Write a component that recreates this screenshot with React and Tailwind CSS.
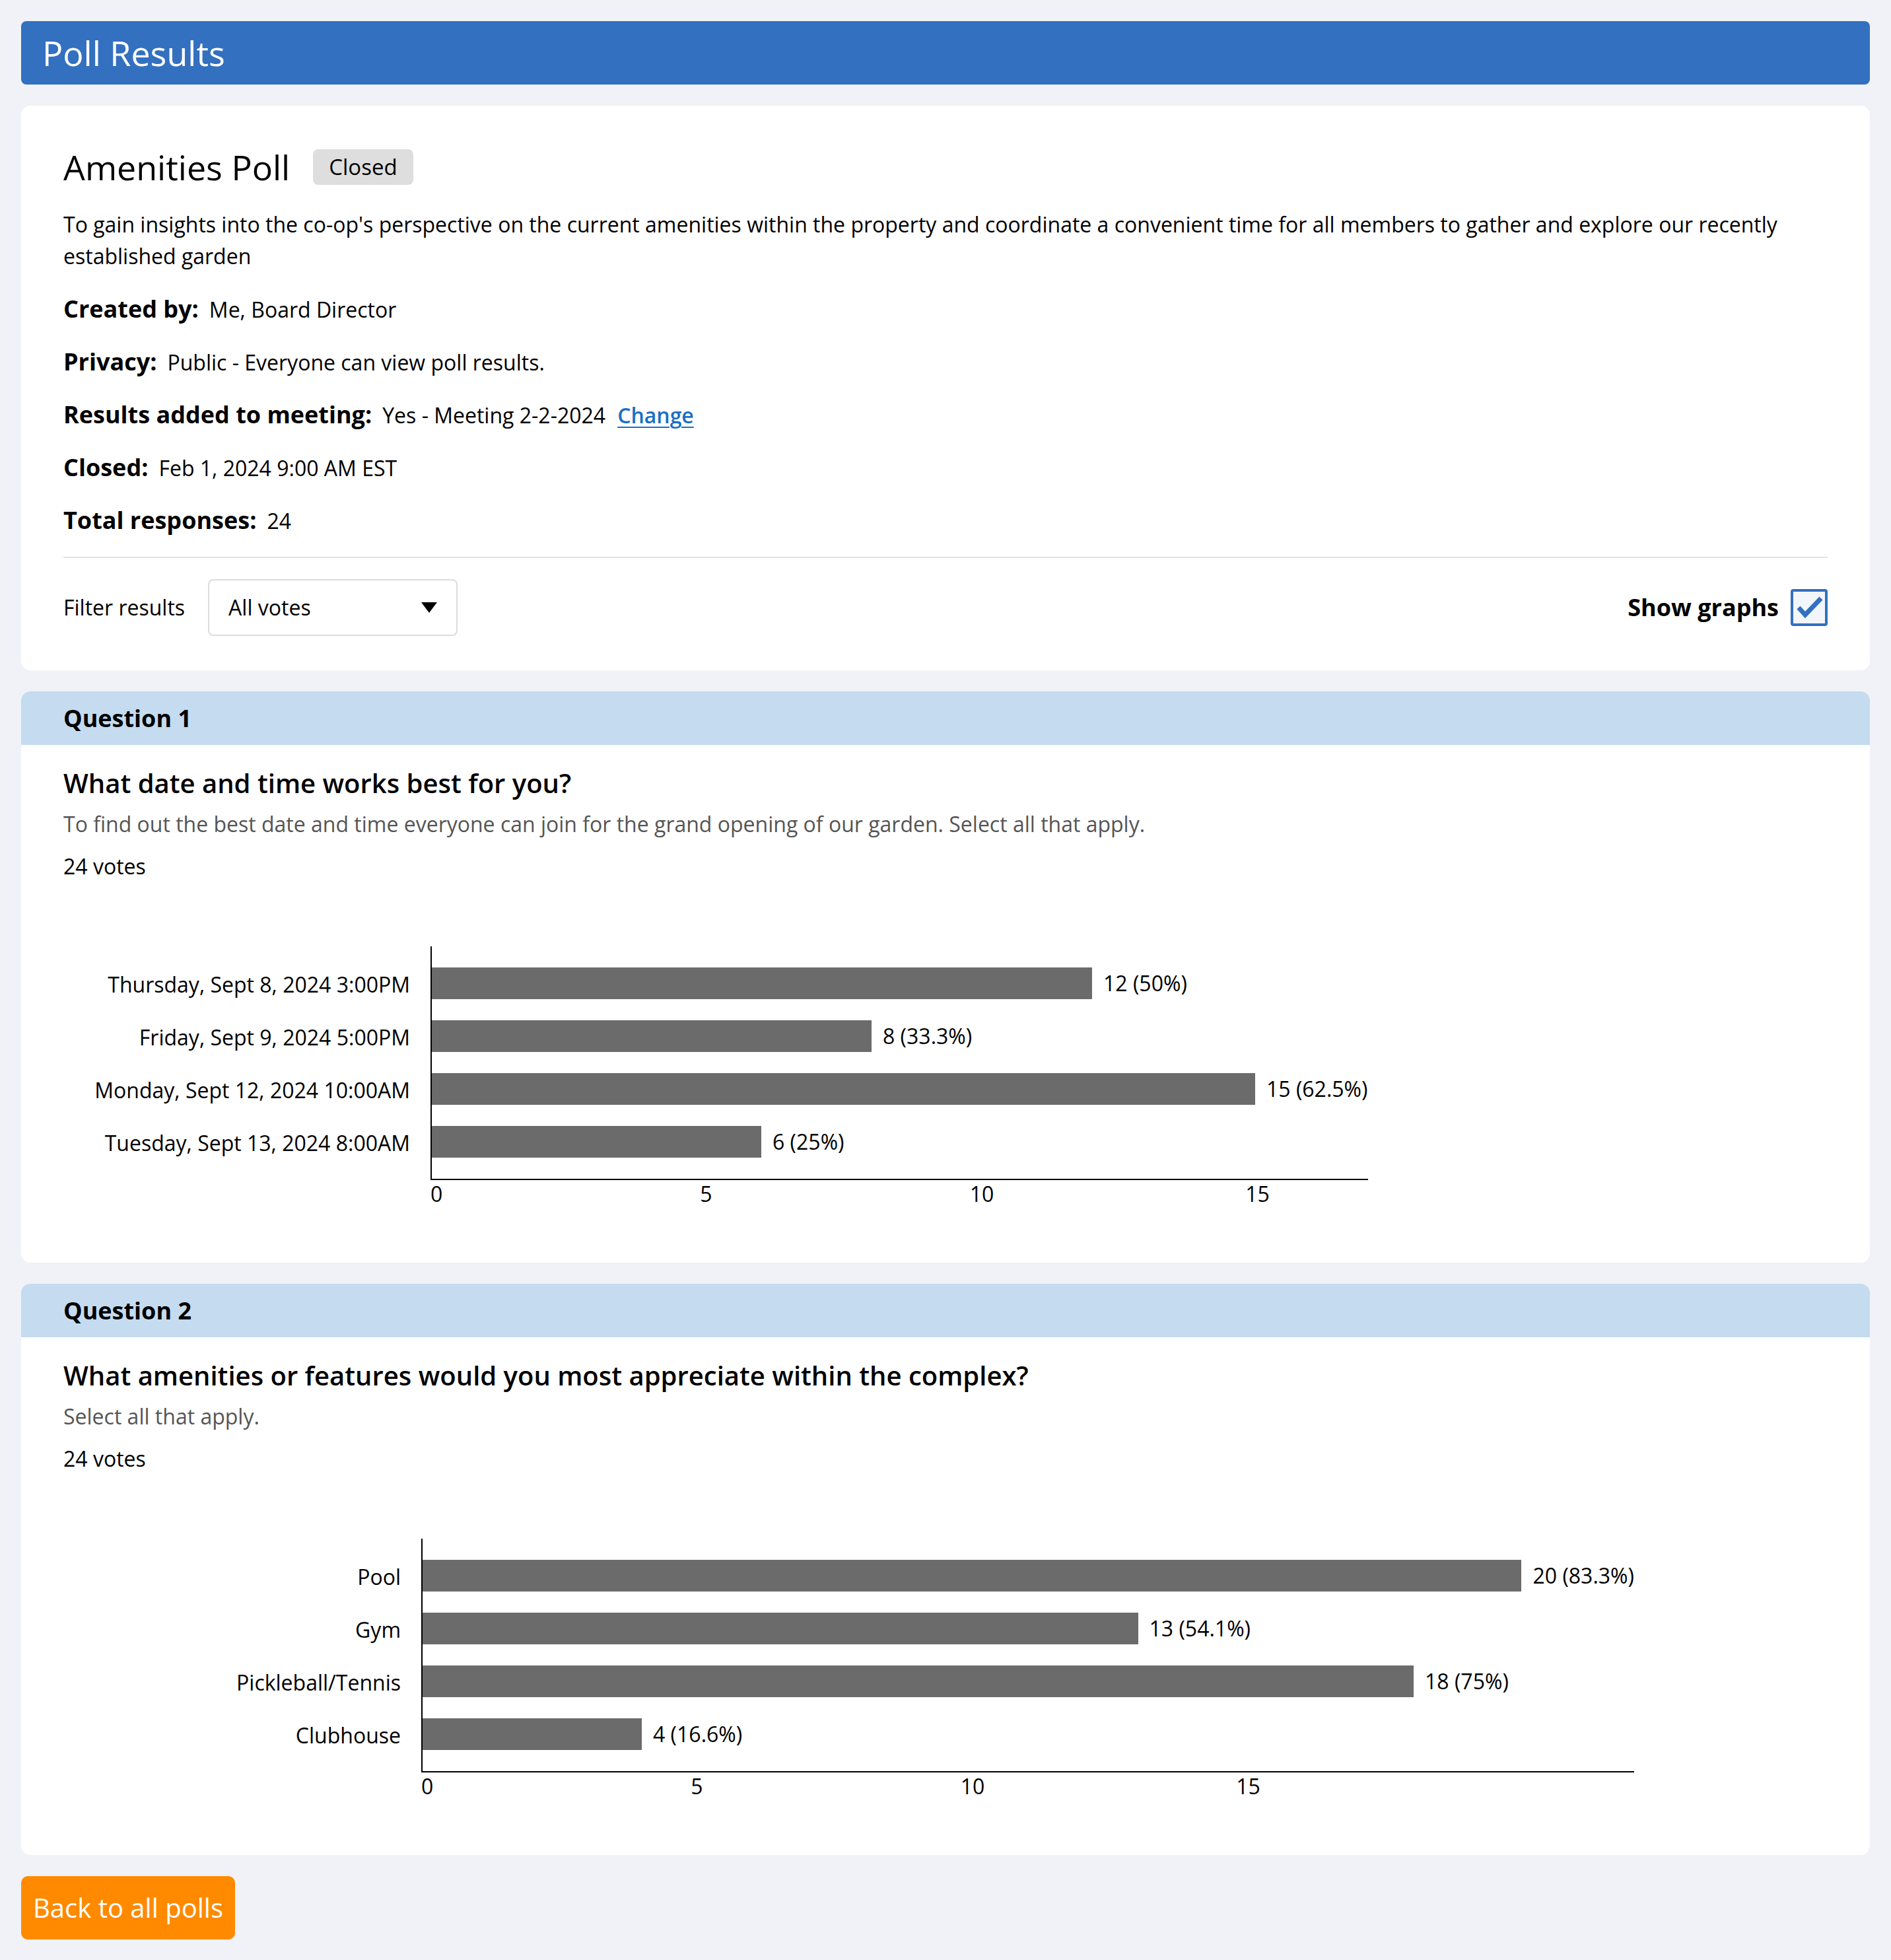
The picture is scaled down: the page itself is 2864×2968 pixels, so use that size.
import React from "react";

const UNIT = 83.5;

function Chart({ data, labelClass, max }) {
  const ticks = [0, 5, 10, 15];
  return (
    <div className="flex">
      <div className={"flex flex-col gap-[32px] pt-[34px] pr-[31px] " + labelClass}>
        {data.map((d) => (
          <div key={d.label} className="h-[48px] flex items-center justify-end text-[32px] text-black whitespace-nowrap">
            {d.label}
          </div>
        ))}
      </div>
      <div className="flex flex-col">
        <div
          className="border-l-2 border-b-2 border-black flex flex-col gap-[32px] pt-[32px] pb-[32px]"
          style={{ width: max * UNIT }}
        >
          {data.map((d) => (
            <div key={d.label} className="h-[48px] flex items-center">
              <div className="h-[48px] bg-[#6b6b6b]" style={{ width: d.value * UNIT - 2 }} />
              <span className="ml-[17px] text-[32px] text-black whitespace-nowrap">{d.text}</span>
            </div>
          ))}
        </div>
        <div className="relative h-[42px] text-[32px] leading-[42px] text-black">
          {ticks.map((t) => (
            <span
              key={t}
              className={"absolute top-0 " + (t === 0 ? "" : "-translate-x-1/2")}
              style={{ left: t === 0 ? 0 : t * UNIT }}
            >
              {t}
            </span>
          ))}
        </div>
      </div>
    </div>
  );
}

function Question({ num, title, desc, data, labelClass, max }) {
  return (
    <section className="bg-white rounded-[14px] overflow-hidden">
      <div className="h-[81px] bg-[#c4dbf0] px-[64px] flex items-center text-[36px] font-bold text-black">
        Question {num}
      </div>
      <div className="px-[64px] pt-[34px] pb-[83px]">
        <h2 className="text-[40px] leading-[48px] font-semibold text-black">{title}</h2>
        <p className="mt-[14px] text-[32px] leading-[48px] text-[#555555]">{desc}</p>
        <p className="mt-[16px] text-[32px] leading-[48px] text-black">24 votes</p>
        <div className="mt-[97px]">
          <Chart data={data} labelClass={labelClass} max={max} />
        </div>
      </div>
    </section>
  );
}

function Row({ label, children }) {
  return (
    <p className="h-[48px] leading-[48px] text-[32px] text-black whitespace-nowrap">
      <span className="text-[36px] font-bold">{label}</span>
      <span className="ml-[16px]">{children}</span>
    </p>
  );
}

export default function App() {
  const q1 = [
    { label: "Thursday, Sept 8, 2024 3:00PM", value: 12, text: "12 (50%)" },
    { label: "Friday, Sept 9, 2024 5:00PM", value: 8, text: "8 (33.3%)" },
    { label: "Monday, Sept 12, 2024 10:00AM", value: 15, text: "15 (62.5%)" },
    { label: "Tuesday, Sept 13, 2024 8:00AM", value: 6, text: "6 (25%)" },
  ];
  const q2 = [
    { label: "Pool", value: 20, text: "20 (83.3%)" },
    { label: "Gym", value: 13, text: "13 (54.1%)" },
    { label: "Pickleball/Tennis", value: 18, text: "18 (75%)" },
    { label: "Clubhouse", value: 4, text: "4 (16.6%)" },
  ];
  return (
    <div className="min-h-screen bg-[#f0f2f7] p-[32px] flex flex-col gap-[32px] font-['Open_Sans','Noto_Sans',sans-serif]">
      <header className="h-[96px] rounded-[8px] bg-[#3370bf] pl-[32px] flex items-center">
        <h1 className="text-[52px] text-white">Poll Results</h1>
      </header>

      <section className="bg-white rounded-[14px] px-[64px] pt-[61px] pb-[52px]">
        <div className="h-[64px] flex items-center">
          <h2 className="text-[52px] leading-[64px] text-black">Amenities Poll</h2>
          <span className="ml-[35px] h-[54px] px-[24px] rounded-[8px] bg-[#dedede] flex items-center text-[33px] text-black">
            Closed
          </span>
        </div>
        <p className="mt-[31px] text-[32px] leading-[48px] text-black">
          To gain insights into the co-op's perspective on the current amenities within the property and coordinate a convenient time for all members to gather and explore our recently established garden
        </p>
        <div className="mt-[32px] flex flex-col gap-[32px]">
          <Row label="Created by:">Me, Board Director</Row>
          <Row label="Privacy:">Public - Everyone can view poll results.</Row>
          <Row label="Results added to meeting:">
            Yes - Meeting 2-2-2024
            <a href="#" className="ml-[18px] text-[#1a6fc4] font-semibold underline underline-offset-[5px] decoration-2">
              Change
            </a>
          </Row>
          <Row label="Closed:">Feb 1, 2024 9:00 AM EST</Row>
          <Row label="Total responses:">24</Row>
        </div>
        <div className="mt-[31px] h-[2px] bg-[#e2e2e2]" />
        <div className="mt-[32px] flex items-center justify-between">
          <div className="flex items-center">
            <span className="text-[32px] text-black">Filter results</span>
            <div className="ml-[35px] w-[378px] h-[86px] border-2 border-[#dcdcdc] rounded-[8px] pl-[29px] pr-[29px] flex items-center justify-between">
              <span className="text-[32px] text-black">All votes</span>
              <svg width="24" height="16" viewBox="0 0 24 16">
                <polygon points="0,0 24,0 12,16" fill="#000" />
              </svg>
            </div>
          </div>
          <label className="flex items-center">
            <span className="text-[36px] font-bold text-black">Show graphs</span>
            <span className="ml-[18px] w-[56px] h-[56px] rounded-[4px] border-[4px] border-[#3370bf] bg-[#f2f6fb] flex items-center justify-center">
              <svg width="48" height="48" viewBox="0 0 48 48">
                <path d="M8 24 L18 35 L42 10" fill="none" stroke="#3370bf" strokeWidth="7" strokeLinecap="butt" strokeLinejoin="miter" />
              </svg>
            </span>
          </label>
        </div>
      </section>

      <Question
        num={1}
        title="What date and time works best for you?"
        desc="To find out the best date and time everyone can join for the grand opening of our garden. Select all that apply."
        data={q1}
        labelClass="w-[556px]"
        max={17}
      />
      <Question
        num={2}
        title="What amenities or features would you most appreciate within the complex?"
        desc="Select all that apply."
        data={q2}
        labelClass="w-[542px]"
        max={22}
      />

      <div>
        <button className="h-[96px] px-[18px] rounded-[10px] bg-[#ff8a00] text-white text-[40px]">
          Back to all polls
        </button>
      </div>
    </div>
  );
}
